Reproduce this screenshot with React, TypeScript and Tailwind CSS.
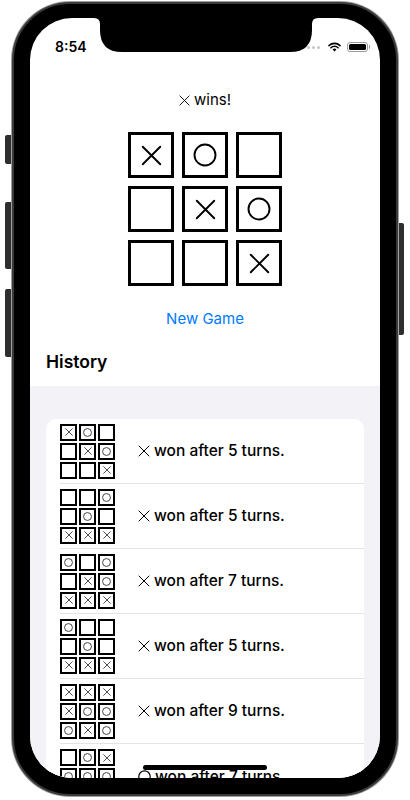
import React from 'react';

type Mark = 'X' | 'O' | '_';

const history: { cells: string; winner: Mark; turns: number }[] = [
    { cells: 'XO__XO__X', winner: 'X', turns: 5 },
    { cells: '__O_O_XXX', winner: 'X', turns: 5 },
    { cells: 'O_O_XOXXX', winner: 'X', turns: 7 },
    { cells: 'O___O_XXX', winner: 'X', turns: 5 },
    { cells: 'XXXXOOOXO', winner: 'X', turns: 9 },
    { cells: '_OXOOOX_X', winner: 'O', turns: 7 },
];

const current: Mark[] = ['X', 'O', '_', '_', 'X', 'O', '_', '_', 'X'];

const XMark = ({ className, stroke }: { className: string; stroke: number }) => (
    <svg viewBox="0 0 24 24" className={className} fill="none" stroke="currentColor" strokeWidth={stroke} strokeLinecap="round">
        <path d="M2 2 L22 22 M22 2 L2 22" />
    </svg>
);

const OMark = ({ className, stroke }: { className: string; stroke: number }) => (
    <svg viewBox="0 0 24 24" className={className} fill="none" stroke="currentColor" strokeWidth={stroke}>
        <circle cx="12" cy="12" r="10.5" />
    </svg>
);

const MiniBoard = ({ cells }: { cells: string }) => (
    <div className="grid grid-cols-3 gap-[2px] w-[55px] shrink-0">
        {cells.split('').map((c, i) => (
            <div key={i} className="w-[17px] h-[17px] border-2 border-black flex items-center justify-center text-[#333]">
                {c === 'X' && <XMark className="w-[8px] h-[8px]" stroke={2.6} />}
                {c === 'O' && <OMark className="w-[9px] h-[9px]" stroke={2.4} />}
            </div>
        ))}
    </div>
);

export default function App() {
    return (
        <div className="w-[410px] h-[800px] bg-white pt-[2px] pl-[12px] font-['Inter',sans-serif] text-black">
            <div className="relative w-[386px] h-[794px] rounded-[58px] bg-black border-2 border-[#3a3a3a] shadow-[0_0_0_1px_#a0a0a0] pt-[14px] px-[16px]">
                {/* side buttons */}
                <div className="absolute -left-[9px] top-[131px] w-[6px] h-[29px] rounded-l-[2px] bg-[#2e2e2e]" />
                <div className="absolute -left-[9px] top-[198px] w-[6px] h-[67px] rounded-l-[2px] bg-[#2e2e2e]" />
                <div className="absolute -left-[9px] top-[285px] w-[6px] h-[68px] rounded-l-[2px] bg-[#2e2e2e]" />
                <div className="absolute -right-[8px] top-[219px] w-[5px] h-[112px] rounded-r-[2px] bg-[#2e2e2e]" />

                <div className="relative w-[350px] h-[760px] rounded-[42px] bg-white overflow-hidden">
                    {/* notch */}
                    <svg className="absolute left-[64px] top-0 w-[224px] h-[34px] z-10" viewBox="0 0 224 34">
                        <path d="M0 0 H224 Q218 0 218 6 V12 Q218 34 196 34 H28 Q6 34 6 12 V6 Q6 0 0 0 Z" fill="#000" />
                    </svg>

                    {/* status bar */}
                    <div className="h-[58px] pt-[20px] pl-[25px] pr-[10px] flex justify-between items-start">
                        <span className="text-[14px] leading-[18px] font-semibold">8:54</span>
                        <div className="flex items-center gap-[6px] h-[18px]">
                            <div className="flex gap-[2px] mr-[2px]">
                                <div className="w-[3px] h-[3px] rounded-full bg-[#c7c7c7]" />
                                <div className="w-[3px] h-[3px] rounded-full bg-[#c7c7c7]" />
                                <div className="w-[3px] h-[3px] rounded-full bg-[#c7c7c7]" />
                                <div className="w-[3px] h-[3px] rounded-full bg-[#c7c7c7]" />
                            </div>
                            <svg viewBox="0 0 16 12" className="w-[13px] h-[10px]">
                                <path d="M8 11.5 L5.6 9 A3.4 3.4 0 0 1 10.4 9 Z" fill="#000" />
                                <path d="M3.6 7 A6.2 6.2 0 0 1 12.4 7" stroke="#000" strokeWidth="1.9" fill="none" strokeLinecap="round" />
                                <path d="M1.2 4.3 A9.8 9.8 0 0 1 14.8 4.3" stroke="#000" strokeWidth="1.9" fill="none" strokeLinecap="round" />
                            </svg>
                            <div className="flex items-center">
                                <div className="w-[21px] h-[10px] rounded-[3px] border border-[#9a9a9a] p-[1px]">
                                    <div className="w-full h-full rounded-[1.5px] bg-black" />
                                </div>
                                <div className="w-[1.5px] h-[4px] rounded-r-[1px] bg-[#9a9a9a] ml-[1px]" />
                            </div>
                        </div>
                    </div>

                    {/* game */}
                    <div className="mt-[14px] flex justify-center items-center gap-[4px] text-[15px] leading-[20px]">
                        <XMark className="w-[11px] h-[11px]" stroke={2} />
                        <span>wins!</span>
                    </div>

                    <div className="mt-[22px] mx-auto grid grid-cols-3 gap-x-[8px] gap-y-[8px] w-[154px]">
                        {current.map((c, i) => (
                            <div key={i} className="w-[46px] h-[46px] border-[3px] border-black flex items-center justify-center">
                                {c === 'X' && <XMark className="w-[21px] h-[21px]" stroke={2.2} />}
                                {c === 'O' && <OMark className="w-[24px] h-[24px]" stroke={1.9} />}
                            </div>
                        ))}
                    </div>

                    <div className="mt-[23px] text-center text-[15px] leading-[20px] text-[#007aff]">New Game</div>

                    <div className="mt-[21px] pl-[16px] pb-[12px] text-[17.5px] leading-[24px] font-semibold">History</div>

                    {/* history list */}
                    <div className="bg-[#f2f2f7] pt-[33px] px-[16px] pb-[40px]">
                        <div className="bg-white rounded-[10px]">
                            {history.map((h, i) => (
                                <div key={i} className="pl-[14px]">
                                    <div className={`flex items-center h-[65px] ${i < history.length - 1 ? 'border-b border-[#e3e3e8]' : ''}`}>
                                        <MiniBoard cells={h.cells} />
                                        <div className="ml-[23px] flex items-center gap-[4px] text-[15.5px] leading-[20px] font-medium">
                                            {h.winner === 'X' ? (
                                                <XMark className="w-[12px] h-[12px]" stroke={2} />
                                            ) : (
                                                <OMark className="w-[13px] h-[13px]" stroke={2.2} />
                                            )}
                                            <span>won after {h.turns} turns.</span>
                                        </div>
                                    </div>
                                </div>
                            ))}
                        </div>
                    </div>

                    {/* home indicator */}
                    <div className="absolute left-[113px] top-[747px] w-[124px] h-[5px] rounded-full bg-black" />
                </div>
            </div>
        </div>
    );
}
